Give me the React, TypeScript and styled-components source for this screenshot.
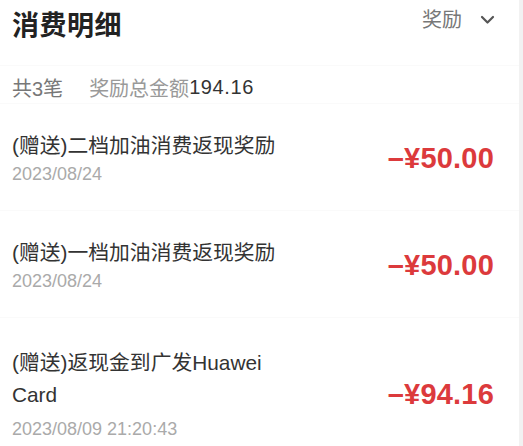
import styled, { createGlobalStyle } from 'styled-components';

const GlobalStyle = createGlobalStyle`
    html, body {
        margin: 0;
        padding: 0;
        background: #ffffff;
    }
    body {
        font-family: "Liberation Sans", "Noto Sans CJK SC", sans-serif;
    }
`

const Page = styled.div`
    width: 519px;
    min-height: 446px;
    background: #ffffff;
    border-right: 4px solid #f2f2f2;
`

const Header = styled.div`
    display: flex;
    align-items: flex-start;
    justify-content: space-between;
    height: 66px;
    box-sizing: border-box;
    padding: 10px 24px 0 12px;
    border-bottom: 1px solid #fafafa;
`

const Title = styled.h1`
    margin: 0;
    font-size: 27px;
    line-height: 32px;
    font-weight: bold;
    color: #222;
    letter-spacing: 0.5px;
`

const Filter = styled.div`
    display: flex;
    align-items: center;
    gap: 18px;
    font-size: 20px;
    line-height: 24px;
    color: #777;
    margin-top: -2px;
`

const Summary = styled.div`
    display: flex;
    align-items: center;
    height: 38px;
    box-sizing: border-box;
    padding: 6px 12px 0;
    font-size: 20px;
    border-bottom: 1px solid #fafafa;
`

const Muted = styled.span<{ $tone?: 'mid' | 'light' | 'dark'; $gap?: number }>`
    color: ${p => p.$tone === 'dark' ? '#333' : p.$tone === 'light' ? '#999' : '#777'};
    margin-left: ${p => p.$gap ?? 0}px;
    letter-spacing: ${p => p.$tone === 'dark' ? '0.6px' : '0'};
`

const Item = styled.div<{ $tall?: boolean }>`
    display: flex;
    align-items: center;
    justify-content: space-between;
    padding: ${p => p.$tall ? 29 : 26}px 25px 24px 12px;
    border-bottom: 1px solid #fafafa;
`

const ItemText = styled.div`
    display: flex;
    flex-direction: column;
`

const ItemName = styled.div<{ $wrap?: boolean }>`
    font-size: 20.8px;
    line-height: 32px;
    color: #333;
    width: ${p => p.$wrap ? '275px' : 'auto'};
`

const ItemDate = styled.div<{ $spaced?: boolean }>`
    font-size: 18px;
    line-height: 24px;
    color: #aaa;
    margin-top: ${p => p.$spaced ? 6 : 0}px;
`

const Amount = styled.div`
    font-size: 29px;
    font-weight: bold;
    color: #dc3a3c;
    letter-spacing: 0.2px;
`

const records = [
    { name: '(赠送)二档加油消费返现奖励', date: '2023/08/24', amount: '–¥50.00' },
    { name: '(赠送)一档加油消费返现奖励', date: '2023/08/24', amount: '–¥50.00' },
    { name: '(赠送)返现金到广发Huawei Card', date: '2023/08/09 21:20:43', amount: '–¥94.16', wrap: true },
]

const Chevron = () => (
    <svg width="15" height="10" viewBox="0 0 15 10">
        <polyline points="2,2 7.5,7.5 13,2" fill="none" stroke="#555" strokeWidth="2.2" strokeLinecap="round" strokeLinejoin="round" />
    </svg>
)

export default function App() {
    return (
        <Page>
            <GlobalStyle />
            <Header>
                <Title>消费明细</Title>
                <Filter>
                    奖励
                    <Chevron />
                </Filter>
            </Header>
            <Summary>
                <Muted>共3笔</Muted>
                <Muted $tone="light" $gap={26}>奖励总金额</Muted>
                <Muted $tone="dark">194.16</Muted>
            </Summary>
            {records.map((r, i) => (
                <Item key={i} $tall={r.wrap}>
                    <ItemText>
                        <ItemName $wrap={r.wrap}>{r.name}</ItemName>
                        <ItemDate $spaced={r.wrap}>{r.date}</ItemDate>
                    </ItemText>
                    <Amount>{r.amount}</Amount>
                </Item>
            ))}
        </Page>
    );
}
